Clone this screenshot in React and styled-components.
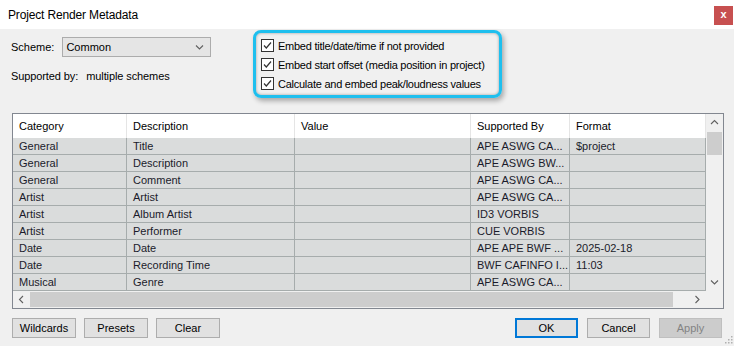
import React from "react";
import styled, { createGlobalStyle } from "styled-components";

const GlobalStyle = createGlobalStyle`
  html, body {
    margin: 0;
    padding: 0;
    background: #f0f0f0;
  }
  body {
    font-family: "Liberation Sans", Arial, sans-serif;
    font-size: 11px;
    color: #000;
  }
`;

const columns = [
  { name: "Category", width: 114 },
  { name: "Description", width: 168 },
  { name: "Value", width: 176 },
  { name: "Supported By", width: 99 },
  { name: "Format", width: 136 },
];

const rows = [
  ["General", "Title", "", "APE ASWG CA...", "$project"],
  ["General", "Description", "", "APE ASWG BW...", ""],
  ["General", "Comment", "", "APE ASWG CA...", ""],
  ["Artist", "Artist", "", "APE ASWG CA...", ""],
  ["Artist", "Album Artist", "", "ID3 VORBIS", ""],
  ["Artist", "Performer", "", "CUE VORBIS", ""],
  ["Date", "Date", "", "APE APE BWF ...", "2025-02-18"],
  ["Date", "Recording Time", "", "BWF CAFINFO I...", "11:03"],
  ["Musical", "Genre", "", "APE ASWG CA...", ""],
];

const options = [
  "Embed title/date/time if not provided",
  "Embed start offset (media position in project)",
  "Calculate and embed peak/loudness values",
];

function Chevron({ dir }) {
  const paths = {
    down: "M1 1.5 L4.5 5 L8 1.5",
    up: "M1 5 L4.5 1.5 L8 5",
    left: "M5 1 L1.5 4.5 L5 8",
    right: "M1.5 1 L5 4.5 L1.5 8",
  };
  const vertical = dir === "up" || dir === "down";
  return (
    <svg
      width={vertical ? 9 : 7}
      height={vertical ? 7 : 9}
      viewBox={vertical ? "0 0 9 7" : "0 0 7 9"}
    >
      <path d={paths[dir]} fill="none" stroke="#606060" strokeWidth="1.1" />
    </svg>
  );
}

function App() {
  return (
    <>
      <GlobalStyle />
      <Window>
        <TitleBar>
          <span>Project Render Metadata</span>
          <CloseButton>x</CloseButton>
        </TitleBar>
        <Body>
          <Top>
            <SchemeColumn>
              <SchemeRow>
                <span>Scheme:</span>
                <Select>
                  <span>Common</span>
                  <Chevron dir="down" />
                </Select>
              </SchemeRow>
              <SupportedRow>
                <span>Supported by:</span>
                <span>multiple schemes</span>
              </SupportedRow>
            </SchemeColumn>
            <OptionsBox>
              {options.map((label) => (
                <CheckRow key={label}>
                  <CheckBox>
                    <svg width="11" height="11" viewBox="0 0 11 11">
                      <path
                        d="M2 5.5 L4.3 8 L9 2.5"
                        fill="none"
                        stroke="#333"
                        strokeWidth="1.2"
                      />
                    </svg>
                  </CheckBox>
                  <span>{label}</span>
                </CheckRow>
              ))}
            </OptionsBox>
          </Top>

          <Table>
            <Grid>
              <HeaderRow>
                {columns.map((c) => (
                  <HeaderCell key={c.name} $w={c.width}>
                    {c.name}
                  </HeaderCell>
                ))}
              </HeaderRow>
              {rows.map((row, i) => (
                <Row key={i}>
                  {row.map((cell, j) => (
                    <Cell key={j} $w={columns[j].width}>
                      {cell}
                    </Cell>
                  ))}
                </Row>
              ))}
            </Grid>
            <VScroll>
              <ArrowBox>
                <Chevron dir="up" />
              </ArrowBox>
              <VThumb />
              <Track />
              <ArrowBox>
                <Chevron dir="down" />
              </ArrowBox>
            </VScroll>
            <HScroll>
              <ArrowBox>
                <Chevron dir="left" />
              </ArrowBox>
              <HThumb />
              <Track />
              <ArrowBox>
                <Chevron dir="right" />
              </ArrowBox>
            </HScroll>
            <Corner />
          </Table>

          <Buttons>
            <ButtonGroup>
              <Button $w={64}>Wildcards</Button>
              <Button $w={64}>Presets</Button>
              <Button $w={64}>Clear</Button>
            </ButtonGroup>
            <ButtonGroup $right>
              <Button $w={63} $primary>
                OK
              </Button>
              <Button $w={63}>Cancel</Button>
              <Button $w={63} disabled>
                Apply
              </Button>
            </ButtonGroup>
          </Buttons>
        </Body>
        <Grip viewBox="0 0 8 10" width="8" height="10">
          {[
            [6, 1],
            [6, 4],
            [3, 4],
            [6, 7],
            [3, 7],
            [0, 7],
          ].map(([x, y]) => (
            <rect key={`${x}-${y}`} x={x} y={y} width="1.5" height="1.5" fill="#b0b0b0" />
          ))}
        </Grip>
      </Window>
    </>
  );
}

const Window = styled.div`
  position: relative;
  width: 734px;
  height: 346px;
  display: flex;
  flex-direction: column;
  background: #f0f0f0;
  overflow: hidden;
`;

const TitleBar = styled.div`
  height: 29px;
  flex: none;
  background: #fff;
  display: flex;
  align-items: center;
  justify-content: space-between;
  padding-left: 8px;
  font-size: 12px;
  letter-spacing: -0.15px;
  color: #000;
`;

const CloseButton = styled.div`
  align-self: flex-start;
  margin-top: 6px;
  margin-right: 1px;
  width: 19px;
  height: 19px;
  background: #c75050;
  color: #fff;
  font-weight: bold;
  font-size: 11px;
  line-height: 17px;
  text-align: center;
`;

const Body = styled.div`
  flex: 1;
  display: flex;
  flex-direction: column;
  padding: 0 10px 8px 12px;
`;

const Top = styled.div`
  height: 84px;
  display: flex;
  flex: none;
`;

const SchemeColumn = styled.div`
  width: 241px;
  padding-top: 8px;
`;

const SchemeRow = styled.div`
  display: flex;
  align-items: center;
  gap: 8px;
  margin-left: -1px;
`;

const Select = styled.div`
  width: 149px;
  height: 20px;
  box-sizing: border-box;
  background: #e5e5e5;
  border: 1px solid #acacac;
  display: flex;
  align-items: center;
  justify-content: space-between;
  padding: 0 6px 0 3px;
`;

const SupportedRow = styled.div`
  margin-top: 13px;
  margin-left: -1px;
  display: flex;
  gap: 8px;
  letter-spacing: -0.1px;
`;

const OptionsBox = styled.div`
  margin-top: 1px;
  width: 249px;
  height: 68px;
  box-sizing: border-box;
  border: 3px solid #1ebfee;
  border-radius: 8px;
  box-shadow: 2px 3px 5px rgba(0, 0, 0, 0.3),
    inset 0 0 3px rgba(0, 0, 0, 0.35);
  padding: 3px 0 0 5px;
`;

const CheckRow = styled.div`
  height: 19px;
  display: flex;
  align-items: center;
  gap: 4px;
  color: #000;
  letter-spacing: -0.25px;
`;

const CheckBox = styled.div`
  width: 13px;
  height: 13px;
  box-sizing: border-box;
  border: 1px solid #333;
  background: #fff;
  display: flex;
  align-items: center;
  justify-content: center;
`;

const Table = styled.div`
  height: 196px;
  flex: none;
  box-sizing: border-box;
  border: 1px solid #828790;
  display: grid;
  grid-template-columns: 693px 17px;
  grid-template-rows: 177px 17px;
  background: #fff;
`;

const Grid = styled.div`
  overflow: hidden;
  background: #fff;
`;

const HeaderRow = styled.div`
  display: flex;
  height: 24px;
`;

const HeaderCell = styled.div`
  width: ${(p) => p.$w}px;
  box-sizing: border-box;
  border-right: 1px solid #e5e5e5;
  padding-left: 6px;
  display: flex;
  align-items: center;
  color: #000;
`;

const Row = styled.div`
  display: flex;
  height: 17px;
  background: #dadcdc;
`;

const Cell = styled.div`
  width: ${(p) => p.$w}px;
  box-sizing: border-box;
  border-right: 1px solid #a6acac;
  border-bottom: 1px solid #a6acac;
  padding-left: 6px;
  display: flex;
  align-items: center;
  white-space: nowrap;
  overflow: hidden;
  color: #1b1b2b;
`;

const VScroll = styled.div`
  background: #f0f0f0;
  display: flex;
  flex-direction: column;
  align-items: center;
`;

const HScroll = styled.div`
  background: #f0f0f0;
  display: flex;
  align-items: center;
`;

const ArrowBox = styled.div`
  width: 17px;
  height: 17px;
  flex: none;
  display: flex;
  align-items: center;
  justify-content: center;
`;

const VThumb = styled.div`
  margin-top: 1px;
  width: 15px;
  height: 23px;
  background: #cdcdcd;
`;

const HThumb = styled.div`
  width: 643px;
  height: 15px;
  background: #cdcdcd;
`;

const Track = styled.div`
  flex: 1;
`;

const Corner = styled.div`
  background: #f0f0f0;
`;

const Buttons = styled.div`
  margin-top: 9px;
  display: flex;
  justify-content: space-between;
`;

const ButtonGroup = styled.div`
  display: flex;
  gap: ${(p) => (p.$right ? 9 : 8)}px;
  margin-right: ${(p) => (p.$right ? 2 : 0)}px;
`;

const Button = styled.button`
  width: ${(p) => p.$w}px;
  height: 20px;
  box-sizing: border-box;
  padding: 0;
  font-family: inherit;
  font-size: 11px;
  color: #000;
  background: #e1e1e1;
  border: ${(p) => (p.$primary ? "2px solid #0078d7" : "1px solid #adadad")};
  border-radius: 0;

  &:disabled {
    background: #cccccc;
    border-color: #bfbfbf;
    color: #838383;
  }
`;

const Grip = styled.svg`
  position: absolute;
  right: 1px;
  bottom: 1px;
`;

export default App;
